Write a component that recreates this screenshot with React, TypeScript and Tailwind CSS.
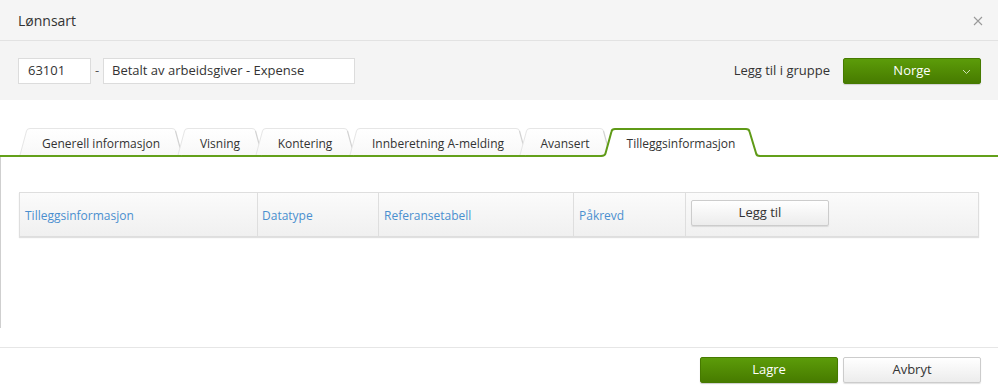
import React from "react";

const tabs = [
  { label: "Generell informasjon", slot: 158, w: 162 },
  { label: "Visning", slot: 78, w: 84 },
  { label: "Kontering", slot: 94, w: 98 },
  { label: "Innberetning A-melding", slot: 170, w: 176 },
  { label: "Avansert", slot: 85, w: 90 },
  { label: "Tilleggsinformasjon", slot: 152, w: 152, active: true },
];

function TabShape({ w, active }: { w: number; active?: boolean }) {
  const H = 27;
  const s = 7;
  if (active) {
    const d = `M -4 ${H + 1} Q 0 ${H + 1} 0.6 ${H - 2} L ${s - 0.5} 3.5 Q ${s} 1 ${s + 3} 1 L ${w - s - 4} 1 Q ${w - s - 1} 1 ${w - s - 0.5} 3.5 L ${w - 1} ${H - 2} Q ${w - 0.5} ${H + 1} ${w + 3} ${H + 1}`;
    return (
      <svg className="absolute left-0 top-0 overflow-visible" width={w} height={H + 2}>
        <path d={d + ` L ${w + 3} ${H + 3} L -4 ${H + 3} Z`} fill="#ffffff" stroke="none" />
        <path d={d} fill="none" stroke="#5f9a17" strokeWidth={2} strokeLinejoin="round" />
      </svg>
    );
  }
  const left = `M 0 ${H} L ${s - 0.5} 3 Q ${s} 0.5 ${s + 3} 0.5 L ${w - s - 3} 0.5 Q ${w - s} 0.5 ${w - s + 0.5} 3`;
  const right = `M ${w - s + 0.5} 3 L ${w} ${H}`;
  return (
    <svg className="absolute left-0 top-0 overflow-visible" width={w} height={H}>
      <defs>
        <linearGradient id="tabg" x1="0" y1="0" x2="0" y2="1">
          <stop offset="0" stopColor="#ffffff" />
          <stop offset="1" stopColor="#f8f8f8" />
        </linearGradient>
      </defs>
      <path d={left + ` L ${w} ${H} Z`} fill="url(#tabg)" stroke="none" />
      <path d={left} fill="none" stroke="#e6e6e6" strokeWidth={1} />
      <path d={right} fill="none" stroke="#d2d2d2" strokeWidth={1.2} />
    </svg>
  );
}

export default function App() {
  const font = { fontFamily: '"Open Sans", "DejaVu Sans", sans-serif' };
  return (
    <div className="w-[998px] h-[391px] bg-white text-[#333] overflow-hidden" style={font}>
      {/* Header */}
      <div className="h-[41px] flex items-center justify-between pl-[18px] pr-[15px] bg-[#f5f5f5] border-b border-[#e2e2e2]">
        <span className="text-[14px] text-[#333]">Lønnsart</span>
        <svg width="10" height="10" viewBox="0 0 10 10" className="mt-[1px]">
          <path d="M1 1 L9 9 M9 1 L1 9" stroke="#9a9a9a" strokeWidth="1.1" />
        </svg>
      </div>
      {/* Top bar */}
      <div className="h-[59px] flex items-center justify-between pl-[18px] pr-[17px] bg-[#f4f4f4]">
        <div className="flex items-center">
          <div className="w-[73px] h-[26px] bg-white border border-[#dcdcdc] flex items-center px-[9px] text-[13px]">63101</div>
          <div className="w-[12px] text-center text-[13px] text-[#555]">-</div>
          <div className="w-[252px] h-[26px] bg-white border border-[#dcdcdc] flex items-center px-[8px] text-[13px]">Betalt av arbeidsgiver - Expense</div>
        </div>
        <div className="flex items-center">
          <span className="text-[13px] mr-[13px]">Legg til i gruppe</span>
          <button className="relative w-[138px] h-[26px] rounded-[2px] bg-gradient-to-b from-[#5c9c0a] to-[#477b00] border border-[#467a00] text-white text-[13px] flex items-center justify-center shadow-[0_1px_1px_rgba(0,0,0,0.15)]">
            Norge
            <svg width="9" height="6" viewBox="0 0 9 6" className="absolute right-[9px] top-[10px]">
              <path d="M1 1 L4.5 4.5 L8 1" stroke="#cfe0b8" strokeWidth="1" fill="none" />
            </svg>
          </button>
        </div>
      </div>
      {/* Tabs */}
      <div className="pt-[29px]">
        <div className="relative h-[28px] flex items-end pl-[20px] border-b-2 border-[#63a01a]">
          {tabs.map((t) => (
            <div key={t.label} className={`relative h-[27px] shrink-0 ${t.active ? "z-10" : ""}`} style={{ width: t.slot }}>
              <TabShape w={t.w} active={t.active} />
              <div className="absolute left-0 top-0 h-[27px] flex items-center justify-center text-[12px] text-[#333] pt-[5px]" style={{ width: t.w }}>
                {t.label}
              </div>
            </div>
          ))}
        </div>
      </div>
      {/* Content */}
      <div className="h-[171px] border-l border-[#cfcfcf] pt-[35px] pl-[18px] pr-[19px]">
        <div className="flex h-[45px] border border-[#dedede] bg-gradient-to-b from-[#fbfbfb] to-[#f0f0f0] shadow-[0_1px_1px_rgba(0,0,0,0.12)] text-[12px] text-[#4a8fcf]">
          <div className="w-[238px] border-r border-[#dedede] flex items-center pl-[5px] pt-[2px]">Tilleggsinformasjon</div>
          <div className="w-[121px] border-r border-[#dedede] flex items-center pl-[4px] pt-[2px]">Datatype</div>
          <div className="w-[195px] border-r border-[#dedede] flex items-center pl-[5px] pt-[2px]">Referansetabell</div>
          <div className="w-[112px] border-r border-[#dedede] flex items-center pl-[5px] pt-[2px]">Påkrevd</div>
          <div className="flex-1 flex items-start pt-[7px] pl-[5px]">
            <button className="w-[138px] h-[26px] rounded-[2px] border border-[#cccccc] bg-gradient-to-b from-[#ffffff] to-[#ececec] text-[13px] text-[#333] shadow-[0_1px_1px_rgba(0,0,0,0.1)]">Legg til</button>
          </div>
        </div>
      </div>
      {/* Footer */}
      <div className="mt-[19px] border-t border-[#e6e6e6] pt-[9px] pr-[17px] flex justify-end gap-[5px]">
        <button className="w-[138px] h-[26px] rounded-[2px] bg-gradient-to-b from-[#5c9c0a] to-[#477b00] border border-[#467a00] text-white text-[13px] shadow-[0_1px_1px_rgba(0,0,0,0.2)]">Lagre</button>
        <button className="w-[138px] h-[26px] rounded-[2px] border border-[#cccccc] bg-gradient-to-b from-[#ffffff] to-[#ececec] text-[13px] text-[#333] shadow-[0_1px_1px_rgba(0,0,0,0.12)]">Avbryt</button>
      </div>
    </div>
  );
}
